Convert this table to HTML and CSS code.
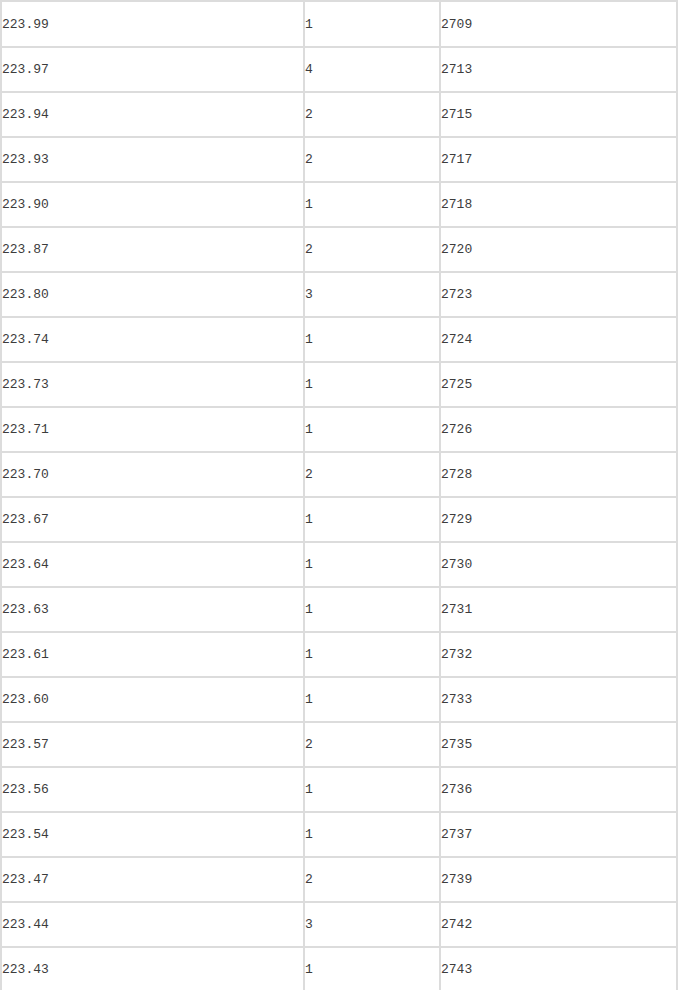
FILE: index.html
```html
<!DOCTYPE html>
<html lang="zh">
<head>
<meta charset="utf-8">
<title>Price table</title>
<link rel="stylesheet" href="styles.css">
</head>
<body>
<table class="grid">
<colgroup><col class="c1"><col class="c2"><col class="c3"></colgroup>
<tbody>
<tr class="first"><td>223.99</td><td>1</td><td>2709</td></tr>
<tr><td>223.97</td><td>4</td><td>2713</td></tr>
<tr><td>223.94</td><td>2</td><td>2715</td></tr>
<tr><td>223.93</td><td>2</td><td>2717</td></tr>
<tr><td>223.90</td><td>1</td><td>2718</td></tr>
<tr><td>223.87</td><td>2</td><td>2720</td></tr>
<tr><td>223.80</td><td>3</td><td>2723</td></tr>
<tr><td>223.74</td><td>1</td><td>2724</td></tr>
<tr><td>223.73</td><td>1</td><td>2725</td></tr>
<tr><td>223.71</td><td>1</td><td>2726</td></tr>
<tr><td>223.70</td><td>2</td><td>2728</td></tr>
<tr><td>223.67</td><td>1</td><td>2729</td></tr>
<tr><td>223.64</td><td>1</td><td>2730</td></tr>
<tr><td>223.63</td><td>1</td><td>2731</td></tr>
<tr><td>223.61</td><td>1</td><td>2732</td></tr>
<tr><td>223.60</td><td>1</td><td>2733</td></tr>
<tr><td>223.57</td><td>2</td><td>2735</td></tr>
<tr><td>223.56</td><td>1</td><td>2736</td></tr>
<tr><td>223.54</td><td>1</td><td>2737</td></tr>
<tr><td>223.47</td><td>2</td><td>2739</td></tr>
<tr><td>223.44</td><td>3</td><td>2742</td></tr>
<tr><td>223.43</td><td>1</td><td>2743</td></tr>
</tbody>
</table>
</body>
</html>
```
FILE: styles.css
```css
html, body {
  margin: 0;
  padding: 0;
  background: #fff;
}
body {
  overflow: hidden;
}
.grid {
  border-collapse: separate;
  border-spacing: 0;
  table-layout: fixed;
  width: 678px;
  border-top: 2px solid #dcdcdc;
  border-left: 2px solid #dcdcdc;
  font-family: "Liberation Mono", "DejaVu Sans Mono", monospace;
  font-size: 13px;
  color: #3c3c3c;
}
.c1 { width: 303px; }
.c2 { width: 136px; }
.c3 { width: 237px; }
.grid td {
  height: 43px;
  padding: 0;
  box-sizing: content-box;
  border-right: 2px solid #dcdcdc;
  border-bottom: 2px solid #dcdcdc;
  vertical-align: middle;
  white-space: nowrap;
  line-height: 15px;
}
.grid tr.first td {
  height: 44px;
}
```
